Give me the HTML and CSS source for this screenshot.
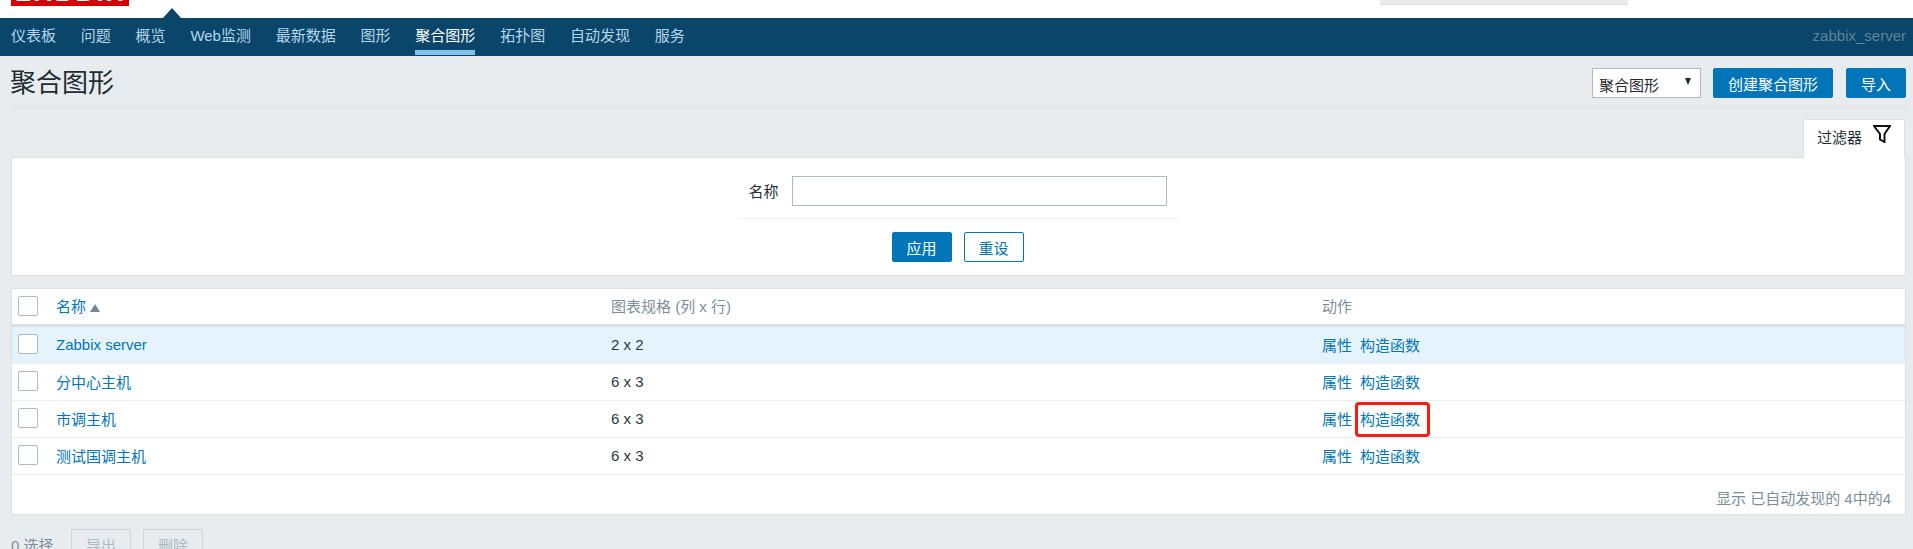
FILE: index.html
```html
<!DOCTYPE html>
<html lang="zh-CN">
<head>
    <meta charset="UTF-8">
    <title>聚合图形</title>
    <link rel="stylesheet" href="styles.css">
</head>
<body>
    <header class="top-bar">
        <div class="logo"><span class="logo-text">ZABBIX</span></div>
        <div class="nav-tip"></div>
        <div class="search-box"></div>
    </header>

    <nav class="main-nav">
        <ul class="nav-list">
            <li><a href="#">仪表板</a></li>
            <li><a href="#">问题</a></li>
            <li><a href="#">概览</a></li>
            <li><a href="#">Web监测</a></li>
            <li><a href="#">最新数据</a></li>
            <li><a href="#">图形</a></li>
            <li><a href="#" class="active">聚合图形</a></li>
            <li><a href="#">拓扑图</a></li>
            <li><a href="#">自动发现</a></li>
            <li><a href="#">服务</a></li>
        </ul>
        <span class="server-name">zabbix_server</span>
    </nav>

    <main class="page">
        <div class="page-head">
            <h1>聚合图形</h1>
            <div class="head-controls">
                <div class="fake-select">聚合图形<span class="select-arrow"></span></div>
                <button type="button" class="btn">创建聚合图形</button>
                <button type="button" class="btn btn-import">导入</button>
            </div>
        </div>

        <div class="filter-tabs">
            <div class="filter-tab">
                <span>过滤器</span>
                <svg class="filter-icon" width="18" height="18" viewBox="0 0 18 18">
                    <path d="M1 1H17L11.5 9V17L7 14.5V9Z" fill="none" stroke="#111" stroke-width="2"/>
                </svg>
            </div>
        </div>

        <section class="filter-panel">
            <div class="filter-row">
                <label for="name">名称</label>
                <input type="text" id="name" class="text-input">
            </div>
            <div class="filter-buttons">
                <button type="button" class="btn btn-apply">应用</button>
                <button type="button" class="btn btn-outline">重设</button>
            </div>
        </section>

        <section class="list-panel">
            <table class="list-table">
                <thead>
                    <tr>
                        <th class="col-check"><span class="checkbox"></span></th>
                        <th class="col-name"><a href="#">名称</a><span class="sort-arrow"></span></th>
                        <th class="col-size">图表规格 (列 x 行)</th>
                        <th>动作</th>
                    </tr>
                </thead>
                <tbody>
                    <tr class="row-hover">
                        <td><span class="checkbox"></span></td>
                        <td><a href="#">Zabbix server</a></td>
                        <td>2 x 2</td>
                        <td class="actions"><a href="#">属性</a><a href="#">构造函数</a></td>
                    </tr>
                    <tr>
                        <td><span class="checkbox"></span></td>
                        <td><a href="#">分中心主机</a></td>
                        <td>6 x 3</td>
                        <td class="actions"><a href="#">属性</a><a href="#">构造函数</a></td>
                    </tr>
                    <tr>
                        <td><span class="checkbox"></span></td>
                        <td><a href="#">市调主机</a></td>
                        <td>6 x 3</td>
                        <td class="actions"><a href="#">属性</a><a href="#" class="marked">构造函数</a></td>
                    </tr>
                    <tr>
                        <td><span class="checkbox"></span></td>
                        <td><a href="#">测试国调主机</a></td>
                        <td>6 x 3</td>
                        <td class="actions"><a href="#">属性</a><a href="#">构造函数</a></td>
                    </tr>
                </tbody>
            </table>
            <div class="table-footer">显示 已自动发现的 4中的4</div>
        </section>

        <div class="bulk-actions">
            <span class="selected-count">0 选择</span>
            <button type="button" class="btn-disabled">导出</button>
            <button type="button" class="btn-disabled">删除</button>
        </div>
    </main>
</body>
</html>
```

FILE: styles.css
```css
* {
    box-sizing: border-box;
}

html, body {
    height: 549px;
    overflow: hidden;
}

body {
    margin: 0;
    background: #e9ecef;
    color: #1f2c33;
    font-family: "Liberation Sans", "Noto Sans CJK SC", sans-serif;
    font-size: 15px;
}

a {
    color: #0275b8;
    text-decoration: none;
}

/* top bar */
.top-bar {
    position: relative;
    height: 18px;
    background: white;
}

.logo {
    width: 118px;
    height: 6px;
    margin-left: 11px;
    background: #d40000;
    overflow: hidden;
}

.logo-text {
    display: block;
    margin-top: -19px;
    padding-left: 5px;
    color: white;
    font-size: 24px;
    font-weight: bold;
    letter-spacing: 3.5px;
    line-height: 24px;
}

.nav-tip {
    position: absolute;
    left: 163px;
    bottom: 0;
    border-left: 9px solid transparent;
    border-right: 9px solid transparent;
    border-bottom: 10px solid #0a466a;
}

.search-box {
    position: absolute;
    left: 1380px;
    top: 0;
    width: 248px;
    height: 5px;
    background: #ebebeb;
    border-bottom: 1px solid #dcdcdc;
}

/* nav */
.main-nav {
    display: flex;
    justify-content: space-between;
    align-items: flex-start;
    height: 38px;
    padding: 0 7px 0 0;
    background: #0a466a;
}

.nav-list {
    display: flex;
    list-style: none;
    margin: 0;
    padding: 0;
}

.nav-list a {
    display: block;
    margin: 0 12.4px;
    height: 37px;
    line-height: 35px;
    color: #b5d6ea;
}

.nav-list li:first-child a {
    margin-left: 11px;
}

.nav-list a.active {
    color: white;
    border-bottom: 5px solid #7dc3ee;
}

.server-name {
    color: #5f8398;
    line-height: 36px;
}

/* page */
.page {
    padding: 0 7px 0 11px;
}

.page-head {
    display: flex;
    justify-content: space-between;
    align-items: center;
    height: 52px;
    padding-top: 3px;
    border-bottom: 1px solid #dde1e5;
}

h1 {
    margin: 0 0 0 -1px;
    font-size: 26px;
    font-weight: normal;
    line-height: 32px;
}

.head-controls {
    display: flex;
    align-items: center;
}

.fake-select {
    display: flex;
    justify-content: space-between;
    align-items: center;
    width: 109px;
    height: 30px;
    margin-right: 12px;
    padding: 3px 9px 0 6px;
    background: white;
    border: 1px solid #acbbc2;
    color: #1f2c33;
}

.select-arrow {
    margin-top: -6px;
    border-left: 3.5px solid transparent;
    border-right: 3.5px solid transparent;
    border-top: 7px solid #1f2c33;
}

.btn {
    height: 30px;
    padding: 0 14px;
    background: #0275b8;
    border: 1px solid #0275b8;
    border-radius: 2px;
    color: white;
    font-family: inherit;
    font-size: 15px;
}

.btn-import {
    width: 60px;
    margin-left: 13px;
    padding: 0;
}

/* filter */
.filter-tabs {
    display: flex;
    justify-content: flex-end;
    height: 38px;
    margin-top: 11px;
    padding-right: 1px;
}

.filter-tab {
    display: flex;
    width: 102px;
    height: 39px;
    padding: 6px 0 0 13px;
    background: white;
    border: 1px solid #dde1e5;
    border-bottom: none;
    border-radius: 2px 2px 0 0;
    position: relative;
    z-index: 1;
}

.filter-icon {
    margin-left: 11px;
    margin-top: -1px;
}

.filter-panel {
    height: 119px;
    background: white;
    border: 1px solid #dde1e5;
}

.filter-row {
    display: flex;
    align-items: center;
    width: 442px;
    height: 43px;
    margin: 18px auto 0;
    padding: 0 12px 13px 11px;
    border-bottom: 1px solid #eef0f2;
}

.filter-row label {
    width: 43px;
}

.text-input {
    width: 375px;
    height: 30px;
    background: white;
    border: 1px solid #acbbc2;
}

.filter-buttons {
    display: flex;
    justify-content: center;
    gap: 12px;
    margin-top: 13px;
    padding-right: 2px;
}

.filter-buttons .btn {
    width: 60px;
    padding: 0;
}

.btn-outline {
    background: white;
    color: #0275b8;
}

/* table */
.list-panel {
    height: 227px;
    margin-top: 12px;
    background: white;
    border: 1px solid #dde1e5;
}

.list-table {
    width: 100%;
    border-collapse: separate;
    border-spacing: 0;
    table-layout: fixed;
}

.list-table th {
    height: 38px;
    padding: 0 0 2px 6px;
    border-bottom: 3px solid #dde1e5;
    color: #7d8e9a;
    font-weight: normal;
    text-align: left;
}

.list-table td {
    height: 37px;
    padding: 0 0 2px 6px;
    border-bottom: 1px solid #ebeef0;
    color: #2b383f;
}

.col-check {
    width: 38px;
}

.col-name {
    width: 555px;
}

.col-size {
    width: 711px;
}

.checkbox {
    display: block;
    width: 20px;
    height: 20px;
    background: white;
    border: 1px solid #acbbc2;
    border-radius: 2px;
}

.sort-arrow {
    display: inline-block;
    margin-left: 4px;
    border-left: 5px solid transparent;
    border-right: 5px solid transparent;
    border-bottom: 8px solid #73899a;
}

.row-hover td {
    background: #e5f3fd;
}

.actions a {
    position: relative;
    margin-right: 8px;
}

.marked::after {
    content: "";
    box-sizing: border-box;
    position: absolute;
    left: -5px;
    top: -9px;
    width: 75px;
    height: 35px;
    border: 3px solid #ff1a0e;
    border-radius: 4px;
}

.table-footer {
    padding: 12px 14px 0 0;
    color: #7d8e9a;
    text-align: right;
}

/* bulk */
.bulk-actions {
    display: flex;
    align-items: center;
    height: 30px;
    margin-top: 14px;
}

.selected-count {
    width: 60px;
    color: #7d8e9a;
}

.btn-disabled {
    width: 60px;
    height: 30px;
    margin-right: 12px;
    background: #e9ecef;
    border: 1px solid #ced5da;
    border-radius: 2px;
    color: #acbbc2;
    font-family: inherit;
    font-size: 15px;
}
```
